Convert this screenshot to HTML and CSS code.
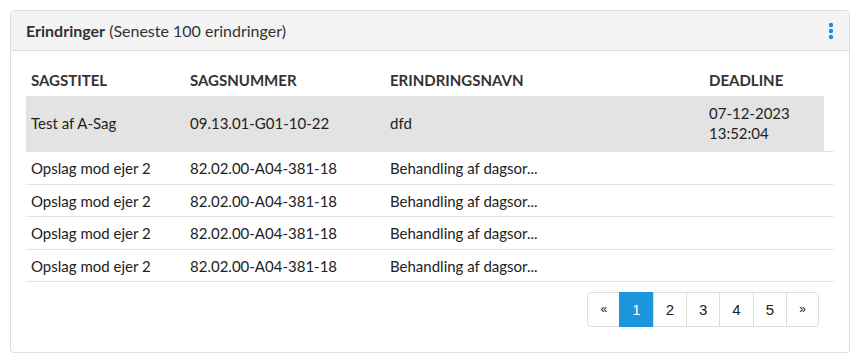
FILE: index.html
```html
<!DOCTYPE html>
<html lang="da">
  <head>
    <meta charset="UTF-8" />
    <title>Erindringer</title>
    <link rel="stylesheet" href="styles.css">
  </head>
  <body>
    <div class="panel">
      <div class="panel-heading">
        <h2><strong>Erindringer</strong> (Seneste 100 erindringer)</h2>
        <button class="menu-btn" aria-label="Menu">
          <svg width="6" height="18" viewBox="0 0 6 18">
            <circle cx="3" cy="3" r="2.2" fill="#1e8fe0" />
            <circle cx="3" cy="9" r="2.2" fill="#1e8fe0" />
            <circle cx="3" cy="15" r="2.2" fill="#1e8fe0" />
          </svg>
        </button>
      </div>

      <div class="panel-body">
        <table class="reminders">
          <thead>
            <tr>
              <th class="col-title">Sagstitel</th>
              <th class="col-number">Sagsnummer</th>
              <th class="col-name">Erindringsnavn</th>
              <th class="col-deadline">Deadline</th>
            </tr>
          </thead>
          <tbody>
            <tr class="selected">
              <td>Test af A-Sag</td>
              <td>09.13.01-G01-10-22</td>
              <td>dfd</td>
              <td>07-12-2023<br />13:52:04</td>
            </tr>
            <tr>
              <td>Opslag mod ejer 2</td>
              <td>82.02.00-A04-381-18</td>
              <td>Behandling af dagsor...</td>
              <td></td>
            </tr>
            <tr>
              <td>Opslag mod ejer 2</td>
              <td>82.02.00-A04-381-18</td>
              <td>Behandling af dagsor...</td>
              <td></td>
            </tr>
            <tr>
              <td>Opslag mod ejer 2</td>
              <td>82.02.00-A04-381-18</td>
              <td>Behandling af dagsor...</td>
              <td></td>
            </tr>
            <tr>
              <td>Opslag mod ejer 2</td>
              <td>82.02.00-A04-381-18</td>
              <td>Behandling af dagsor...</td>
              <td></td>
            </tr>
          </tbody>
        </table>

        <div class="pager-row">
          <ul class="pagination">
            <li><a href="#">&laquo;</a></li>
            <li class="active"><a href="#">1</a></li>
            <li><a href="#">2</a></li>
            <li><a href="#">3</a></li>
            <li><a href="#">4</a></li>
            <li><a href="#">5</a></li>
            <li><a href="#">&raquo;</a></li>
          </ul>
        </div>
      </div>
    </div>
  </body>
</html>
```

FILE: styles.css
```css
* {
  margin: 0;
  padding: 0;
  box-sizing: border-box;
}

body {
  background: #fff;
  color: #222;
  font-family: Lato, "Open Sans", sans-serif;
  font-size: 15px;
  padding: 10px;
}

.panel {
  width: 840px;
  border: 1px solid #ddd;
  border-radius: 4px;
  background: white;
}

.panel-heading {
  display: flex;
  justify-content: space-between;
  align-items: center;
  background: #f4f4f4;
  border-bottom: 1px solid #ddd;
  border-radius: 4px 4px 0 0;
  padding: 0 15px;
  height: 40px;
}

.panel-heading h2 {
  font-size: 16px;
  font-weight: normal;
  color: #333;
  line-height: 20px;
}

.panel-heading strong {
  font-weight: bold;
}

.menu-btn {
  background: none;
  border: none;
  cursor: pointer;
  display: flex;
}

.panel-body {
  padding: 13px 15px 15px;
}

.reminders {
  width: 100%;
  border-collapse: collapse;
  line-height: 20px;
}

.reminders th {
  text-align: left;
  text-transform: uppercase;
  font-weight: bold;
  color: #333;
  padding: 6px 5px;
}

.col-title {
  width: 159px;
}

.col-number {
  width: 200px;
}

.col-name {
  width: 319px;
}

.reminders td {
  padding: 6px 5px 5.5px;
  border-bottom: 1px solid #e4e4e4;
  vertical-align: middle;
}

.reminders tr.selected td {
  background: #e3e3e3;
  padding: 7px 5px 8px;
}

.reminders tr.selected td:last-child {
  background: linear-gradient(to right, #e3e3e3 calc(100% - 10px), #fff 0);
}

.pager-row {
  display: flex;
  justify-content: flex-end;
  padding: 10px 15px 10px 0;
}

.pagination {
  display: flex;
  list-style: none;
  font-family: "Liberation Sans", Arial, sans-serif;
}

.pagination a {
  display: block;
  min-width: 33px;
  padding: 7px 12px;
  line-height: 19px;
  text-align: center;
  color: #222;
  text-decoration: none;
  border: 1px solid #ddd;
  margin-left: -1px;
  font-size: 15px;
}

.pagination li:first-child a {
  margin-left: 0;
  border-radius: 4px 0 0 4px;
  font-size: 12px;
}

.pagination li:last-child a {
  border-radius: 0 4px 4px 0;
  font-size: 12px;
}

.pagination li.active a {
  background: #1b95dc;
  border-color: #1b95dc;
  color: white;
}
```
